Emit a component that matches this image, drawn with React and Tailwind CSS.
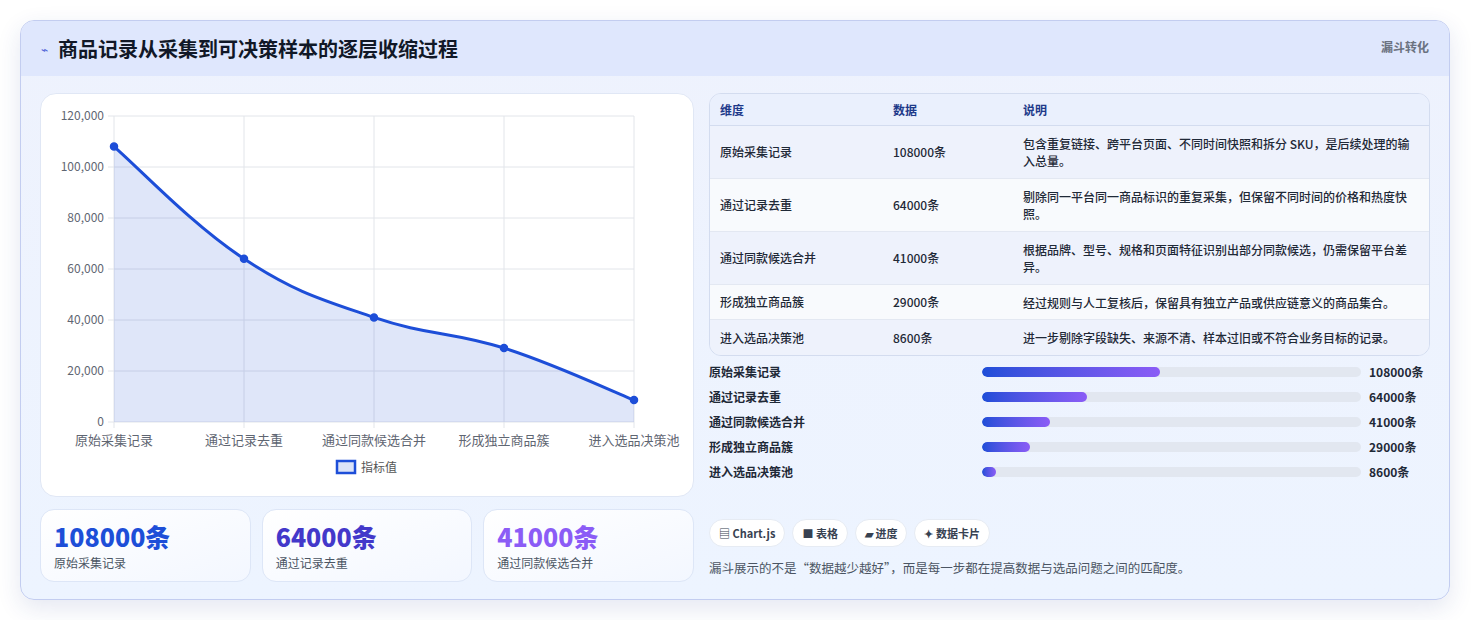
import React from "react";

const F = { fontFamily: '"Noto Sans CJK SC","Noto Sans",sans-serif' };
const labels = ["原始采集记录", "通过记录去重", "通过同款候选合并", "形成独立商品簇", "进入选品决策池"];
const vals = [108000, 64000, 41000, 29000, 8600];
const desc = [
  "包含重复链接、跨平台页面、不同时间快照和拆分 SKU，是后续处理的输入总量。",
  "剔除同一平台同一商品标识的重复采集，但保留不同时间的价格和热度快照。",
  "根据品牌、型号、规格和页面特征识别出部分同款候选，仍需保留平台差异。",
  "经过规则与人工复核后，保留具有独立产品或供应链意义的商品集合。",
  "进一步剔除字段缺失、来源不清、样本过旧或不符合业务目标的记录。",
];

function Chart() {
  const x0 = 73, w = 520, y0 = 22, h = 306;
  const X = (i) => x0 + (i * w) / 4;
  const Y = (v) => y0 + h - (v / 120000) * h;
  const pts = vals.map((v, i) => [X(i), Y(v)]);
  let d = `M${pts[0][0]},${pts[0][1]}`;
  for (let i = 0; i < pts.length - 1; i++) {
    const p0 = pts[i - 1] || pts[i], p1 = pts[i], p2 = pts[i + 1], p3 = pts[i + 2] || p2;
    const t = 0.2;
    const c1 = [p1[0] + (p2[0] - p0[0]) * t, p1[1] + (p2[1] - p0[1]) * t];
    const c2 = [p2[0] - (p3[0] - p1[0]) * t, p2[1] - (p3[1] - p1[1]) * t];
    d += ` C${c1[0]},${c1[1]} ${c2[0]},${c2[1]} ${p2[0]},${p2[1]}`;
  }
  const area = d + ` L${X(4)},${y0 + h} L${X(0)},${y0 + h} Z`;
  return (
    <svg width="653" height="403" style={F}>
      {[0, 1, 2, 3, 4, 5, 6].map((k) => {
        const y = Y(k * 20000);
        return (
          <g key={k}>
            <line x1={x0 - 6} x2={x0 + w} y1={y} y2={y} stroke="#e2e5ea" />
            <text x={x0 - 10} y={y + 4} textAnchor="end" fontSize="12" fill="#5f6672">
              {(k * 20000).toLocaleString("en-US")}
            </text>
          </g>
        );
      })}
      {[0, 1, 2, 3, 4].map((i) => (
        <g key={i}>
          <line x1={X(i)} x2={X(i)} y1={y0} y2={y0 + h + 6} stroke="#e2e5ea" />
          <text x={X(i)} y={y0 + h + 23} textAnchor="middle" fontSize="13" fill="#5f6672">{labels[i]}</text>
        </g>
      ))}
      <path d={area} fill="rgba(29,78,216,0.14)" />
      <path d={d} fill="none" stroke="#1d4ed8" strokeWidth="3" />
      {pts.map((p, i) => (
        <circle key={i} cx={p[0]} cy={p[1]} r="3.5" fill="#1d4ed8" stroke="#1d4ed8" strokeWidth="1.5" />
      ))}
      <rect x="296" y="367" width="18" height="12" fill="#dbe3f8" stroke="#1d4ed8" strokeWidth="2.5" />
      <text x="320" y="378" fontSize="12" fill="#555">指标值</text>
    </svg>
  );
}

export default function App() {
  return (
    <div className="w-[1471px] h-[620px] bg-white p-[20px]" style={F}>
      <div className="w-[1430px] h-[580px] rounded-[14px] border border-[#c3cdf0] bg-gradient-to-b from-[#eef2fd] to-[#edf4ff] overflow-hidden shadow-[0_8px_24px_rgba(30,60,140,0.12)]">
        <div className="h-[55px] bg-[#dfe7fd] flex items-center justify-between px-[20px]">
          <div className="flex items-center gap-[10px]">
            <span className="text-[#4f63d8] text-[12px]">⌁</span>
            <span className="text-[20px] font-bold text-[#111827]">商品记录从采集到可决策样本的逐层收缩过程</span>
          </div>
          <span className="text-[12px] font-bold text-[#6b7280] self-start mt-[17px]">漏斗转化</span>
        </div>
        <div className="flex gap-[15px] px-[19px] pt-[17px]">
          <div className="w-[654px] flex flex-col gap-[12px]">
            <div className="h-[404px] bg-white rounded-[16px] border border-[#e0e7f5]">
              <Chart />
            </div>
            <div className="grid grid-cols-3 gap-[11px]">
              {[0, 1, 2].map((i) => (
                <div key={i} className="h-[73px] rounded-[14px] border border-[#dde6f7] bg-gradient-to-br from-white to-[#f3f7ff] px-[13px] pt-[10px]">
                  <div className={`text-[25px] font-extrabold leading-[32px] ${["text-[#1d4ed8]", "text-[#4338ca]", "text-[#8b5cf6]"][i]}`}>{vals[i]}条</div>
                  <div className="text-[12px] text-[#4b5563] mt-[2px]">{labels[i]}</div>
                </div>
              ))}
            </div>
          </div>
          <div className="w-[724px] flex flex-col">
            <div className="rounded-[12px] border border-[#d3dcef] overflow-hidden text-[12px] font-medium text-[#1f2937]">
              <div className="h-[32px] flex items-center bg-[#eaf0fd] text-[#1e3a8a] font-bold border-b border-[#d3dcef]">
                <div className="w-[183px] pl-[10px]">维度</div>
                <div className="w-[130px]">数据</div>
                <div>说明</div>
              </div>
              {labels.map((l, i) => (
                <div key={i} className={`flex items-center border-b last:border-b-0 border-[#e3e8f2] ${i < 3 ? "h-[53px]" : "h-[35px]"} ${i % 2 ? "bg-[#f8fafd]" : "bg-[#eef2fc]"}`}>
                  <div className="w-[183px] pl-[10px]">{l}</div>
                  <div className="w-[130px]">{vals[i]}条</div>
                  <div className="flex-1 pr-[10px] leading-[17px]">{desc[i]}</div>
                </div>
              ))}
            </div>
            <div className="mt-[9px] flex flex-col gap-[11px]">
              {labels.map((l, i) => (
                <div key={i} className="h-[14px] flex items-center text-[12px] font-bold text-[#1f2937]">
                  <div className="w-[273px]">{l}</div>
                  <div className="w-[379px] h-[10px] rounded-full bg-[#e2e7f0] overflow-hidden">
                    <div className="h-full rounded-full bg-gradient-to-r from-[#1d4ed8] to-[#8b5cf6]" style={{ width: `${Math.max(3.5, vals[i] / 2300)}%` }} />
                  </div>
                  <div className="ml-[8px]">{vals[i]}条</div>
                </div>
              ))}
            </div>
            <div className="mt-[40px] flex gap-[7px] text-[11px] font-bold text-[#374151]">
              {["▤ Chart.js", "■ 表格", "▰ 进度", "✦ 数据卡片"].map((t) => (
                <div key={t} className="h-[28px] px-[9px] flex items-center rounded-full bg-white border border-[#e6ebf3]">{t}</div>
              ))}
            </div>
            <div className="mt-[12px] text-[12.5px] text-[#4b5563]">漏斗展示的不是“数据越少越好”，而是每一步都在提高数据与选品问题之间的匹配度。</div>
          </div>
        </div>
      </div>
    </div>
  );
}
